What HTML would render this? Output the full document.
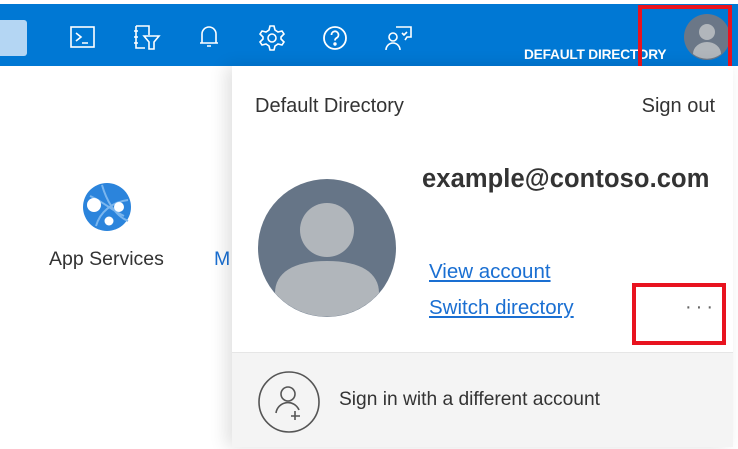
<!DOCTYPE html>
<html><head><meta charset="utf-8"><style>
*{margin:0;padding:0;box-sizing:border-box}
body{width:738px;height:449px;position:relative;overflow:hidden;background:#fff;font-family:"Segoe UI","Liberation Sans",sans-serif}
.hdr{position:absolute;left:0;top:4px;width:738px;height:62px;background:#0078d4}
.sq{position:absolute;left:0;top:16px;width:27px;height:36px;background:#b4d6f3;border-radius:0 3px 3px 0}
.ic{position:absolute;top:20px}
.dd{position:absolute;left:524px;top:43px;color:#fff;font-size:13.7px;font-weight:bold;letter-spacing:-0.2px}
.red{position:absolute;border:4px solid #e8131f}
.panel{position:absolute;left:232px;top:66px;width:501px;height:381px;background:#fff;box-shadow:-6px 0 16px rgba(0,0,0,.12)}
.foot{position:absolute;left:0;top:286px;width:501px;height:95px;background:#f4f4f4;border-top:1px solid #e6e6e6}
a{color:#1a6fd2;text-decoration:underline}
</style></head><body>
<div class="hdr">
<div class="sq"></div>
<svg class="ic" style="left:69px" width="28" height="26" viewBox="0 0 28 26" fill="none" stroke="#fff" stroke-width="1.6"><rect x="2" y="3" width="23" height="20"/><path d="M7 9l5 4-5 4M13 19h6"/></svg>
<svg class="ic" style="left:131px" width="30" height="28" viewBox="0 0 30 28" fill="none" stroke="#fff" stroke-width="1.6"><path d="M5 2h13v9M5 2v22h9M3 7h4M3 13h4M3 19h4M13 12h15l-5 6v7h-5v-7z"/></svg>
<svg class="ic" style="left:198px" width="22" height="26" viewBox="0 0 22 26" fill="none" stroke="#fff" stroke-width="1.6"><path d="M4 19V10a7 7 0 0 1 14 0v9h2H2zM9 22h4"/></svg>
<svg class="ic" style="left:258px" width="28" height="28" viewBox="0 0 28 28" fill="none" stroke="#fff" stroke-width="1.6"><circle cx="14" cy="14" r="4"/><path d="M12 2h4l1 4 3 2 4-1 2 3-3 3v2l3 3-2 3-4-1-3 2-1 4h-4l-1-4-3-2-4 1-2-3 3-3v-2L2 10l2-3 4 1 3-2z"/></svg>
<svg class="ic" style="left:321px" width="28" height="28" viewBox="0 0 28 28" fill="none" stroke="#fff" stroke-width="1.8"><circle cx="14" cy="14" r="11"/><path d="M10.5 11a3.5 3.5 0 1 1 5 3c-1 .6-1.5 1.2-1.5 2.5"/><circle cx="14" cy="20" r=".8" fill="#fff"/></svg>
<svg class="ic" style="left:384px" width="30" height="28" viewBox="0 0 30 28" fill="none" stroke="#fff" stroke-width="1.6"><path d="M12 3h15v10h-4l-2 3"/><circle cx="9" cy="13" r="4"/><path d="M2 26a7 7 0 0 1 14 0M18 9l2 2 3-3"/></svg>
<div class="dd">DEFAULT DIRECTORY</div>
<svg style="position:absolute;left:684px;top:10px" width="46" height="46" viewBox="0 0 46 46"><circle cx="23" cy="23" r="23" fill="#6b7787"/><circle cx="23" cy="18" r="8" fill="#b1b6bb"/><path d="M9 40a14 12 0 0 1 28 0 23 23 0 0 1-28 0z" fill="#b1b6bb"/></svg>
</div>
<div class="red" style="left:638px;top:5px;width:94px;height:65px"></div>
<svg style="position:absolute;left:82px;top:182px" width="50" height="50" viewBox="0 0 50 50"><circle cx="25" cy="25" r="24" fill="#2b84dc"/><path d="M8 14c10 4 22 14 34 20M20 3c4 14 12 30 26 36M14 44c4-14 16-24 32-26" stroke="#7bb6ee" stroke-width="2" fill="none"/><circle cx="12" cy="23" r="7" fill="#fff"/><circle cx="37" cy="25" r="5" fill="#fff"/><circle cx="27" cy="39" r="4.5" fill="#fff"/></svg>
<div style="position:absolute;left:49px;top:248px;font-size:19.5px;color:#333">App Services</div>
<div style="position:absolute;left:214px;top:248px;font-size:19.5px;color:#1a6fd2">M</div>
<div class="panel">
<div style="position:absolute;left:23px;top:29px;font-size:20px;color:#333">Default Directory</div>
<div style="position:absolute;right:18px;top:29px;font-size:20px;color:#333">Sign out</div>
<svg style="position:absolute;left:25px;top:112px" width="140" height="140" viewBox="0 0 140 140"><circle cx="70" cy="70" r="69" fill="#667587"/><circle cx="70" cy="52" r="27" fill="#b1b6bb"/><path d="M18 115c0-20 18-32 52-32s52 12 52 32a69 69 0 0 1-104 0z" fill="#b1b6bb"/></svg>
<div style="position:absolute;left:190px;top:99px;font-size:25.5px;font-weight:bold;color:#333;font-family:'Liberation Sans',sans-serif;letter-spacing:0.1px">example@contoso.com</div>
<div style="position:absolute;left:197px;top:194px;font-size:20.5px"><a>View account</a></div>
<div style="position:absolute;left:197px;top:230px;font-size:20.5px"><a>Switch directory</a></div>
<div style="position:absolute;left:453px;top:230px;font-size:20px;color:#666;letter-spacing:4px">···</div>
<div class="foot">
<svg style="position:absolute;left:26px;top:18px" width="62" height="62" viewBox="0 0 62 62" fill="none" stroke="#555" stroke-width="1.6"><circle cx="31" cy="31" r="30"/><circle cx="30" cy="23" r="7"/><path d="M18 42a12 12 0 0 1 23-3M37 40v9M33 45h9"/></svg>
<div style="position:absolute;left:107px;top:36px;font-size:19.2px;color:#333">Sign in with a different account</div>
</div>
</div>
<div class="red" style="left:632px;top:283px;width:94px;height:62px"></div>
</body></html>
